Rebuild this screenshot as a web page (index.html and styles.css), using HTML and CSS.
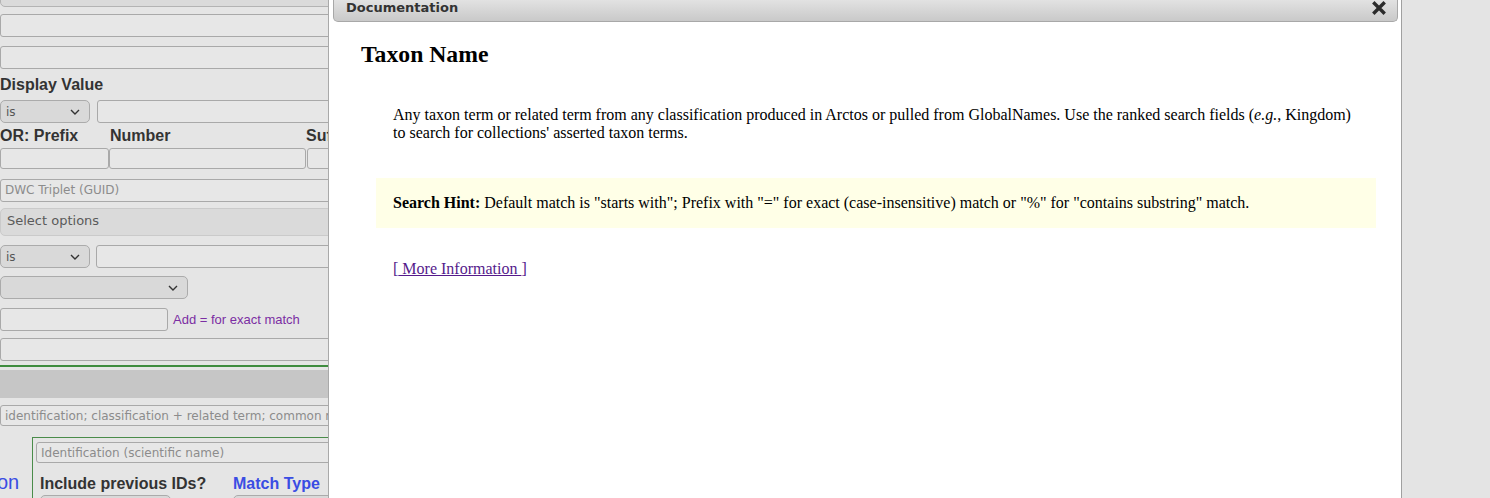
FILE: index.html
```html
<!DOCTYPE html>
<html lang="en">
<head>
<meta charset="utf-8">
<title>Search – Documentation</title>
<link rel="stylesheet" href="styles.css">
</head>
<body>
<div class="page">
  <aside class="form">
    <div class="topbar"></div>
    <div class="box full mt7"></div>
    <div class="box full mt9"></div>

    <div class="label mt6">Display Value</div>
    <div class="row mt5">
      <div class="sel w90"><span>is</span><svg class="chev" width="10" height="6" viewBox="0 0 10 6"><path d="M1 1l4 4 4-4" fill="none" stroke="#333" stroke-width="1.4"/></svg></div>
      <div class="box grow ml7"></div>
    </div>

    <div class="row labels mt4">
      <div class="label lw110">OR: Prefix</div>
      <div class="label lw196">Number</div>
      <div class="label">Suffix</div>
    </div>
    <div class="row mt3">
      <div class="box h21 w109"></div>
      <div class="box h21 w197"></div>
      <div class="box h21 grow ml1"></div>
    </div>

    <div class="box full mt10 ph">DWC Triplet (GUID)</div>
    <div class="optbar mt6">Select options</div>

    <div class="row mt9">
      <div class="sel w90"><span>is</span><svg class="chev" width="10" height="6" viewBox="0 0 10 6"><path d="M1 1l4 4 4-4" fill="none" stroke="#333" stroke-width="1.4"/></svg></div>
      <div class="box grow ml6"></div>
    </div>
    <div class="row mt8">
      <div class="sel w188 h22"><span></span><svg class="chev" width="10" height="6" viewBox="0 0 10 6"><path d="M1 1l4 4 4-4" fill="none" stroke="#333" stroke-width="1.4"/></svg></div>
    </div>
    <div class="row mt9 center">
      <div class="box w168"></div>
      <span class="tip">Add = for exact match</span>
    </div>
    <div class="box full mt7"></div>

    <div class="rule"></div>
    <div class="bar"></div>
    <div class="box full h21 mt7 ph">identification; classification + related term; common name</div>

    <div class="ident">
      <div class="ident-side">on</div>
      <div class="ident-box">
        <div class="box full h21 ph">Identification (scientific name)</div>
        <div class="row ident-labels">
          <div class="label lw193">Include previous IDs?</div>
          <div class="label blue">Match Type</div>
        </div>
        <div class="row ident-sels">
          <div class="sel w131 h22"></div>
          <div class="sel w120 h22 ml62"></div>
        </div>
      </div>
    </div>
  </aside>

  <section class="dialog">
    <header class="dlg-head">
      <span class="dlg-title">Documentation</span>
      <button class="dlg-close" type="button" aria-label="close">
        <svg width="14" height="14" viewBox="0 0 14 14"><path d="M2.5 2.5l9 9M11.5 2.5l-9 9" stroke="#2b2b2b" stroke-width="3.4" stroke-linecap="square"/></svg>
      </button>
    </header>
    <div class="dlg-body">
      <h2 class="doc-title">Taxon Name</h2>
      <div class="doc">
        <p class="doc-text">Any taxon term or related term from any classification produced in Arctos or pulled from GlobalNames. Use the ranked search fields (<i>e.g.</i>, Kingdom) to search for collections' asserted taxon terms.</p>
        <div class="hint"><b>Search Hint:</b> Default match is "starts with"; Prefix with "=" for exact (case-insensitive) match or "%" for "contains substring" match.</div>
        <p class="more">[<a href="#"> More Information </a>]</p>
      </div>
    </div>
  </section>

  <div class="backdrop"></div>
</div>
</body>
</html>
```

FILE: styles.css
```css
* { box-sizing: border-box; }

html, body {
  margin: 0;
  padding: 0;
}

body {
  width: 1490px;
  height: 498px;
  overflow: hidden;
  background: #e4e4e4;
}

.page {
  display: flex;
  height: 498px;
}

/* ---------- search form (left, under the overlay) ---------- */
.form {
  width: 328px;
  flex: none;
  height: 498px;
  overflow: hidden;
  background: #e5e5e5;
  font-family: "Liberation Sans", Arial, sans-serif;
  color: #333;
}

.form > * { width: 345px; }

.topbar {
  height: 28px;
  margin-top: -21px;
  background: #dadada;
  border: 1px solid #b3b3b3;
  border-radius: 0 0 5px 5px;
}

.box {
  height: 23px;
  background: #e7e7e7;
  border: 1px solid #a9a9a9;
  border-radius: 3px;
  flex: none;
}
.box.full { width: 345px; height: 23px; }
.box.full.h21, .h21 { height: 21px; }
.h22 { height: 22px; }

.ph {
  font-family: "DejaVu Sans", Verdana, sans-serif;
  font-size: 12px;
  color: #8c8c8c;
  padding-left: 4px;
  line-height: 20px;
  white-space: nowrap;
  overflow: hidden;
}
.box.full.h21.ph { line-height: 19px; padding-top: 1px; }

.sel {
  display: flex;
  align-items: center;
  justify-content: space-between;
  height: 23px;
  padding: 0 9px 0 5px;
  background: #d9d9d9;
  border: 1px solid #ababab;
  border-radius: 5px;
  flex: none;
  font-family: "DejaVu Sans", Verdana, sans-serif;
  font-size: 12px;
  color: #555;
}
.chev { flex: none; }

.row { display: flex; }
.row.center { align-items: center; }
.grow { flex: 1 1 auto; }

.label {
  flex: none;
  font-size: 16px;
  font-weight: bold;
  line-height: 20px;
  color: #333;
  white-space: nowrap;
}
.labels .label { line-height: 18px; }
.blue { color: #3a4de3; }

.optbar {
  height: 28px;
  background: #dadada;
  border: 1px solid #cacaca;
  border-radius: 5px;
  padding-left: 6px;
  font-family: "DejaVu Sans", Verdana, sans-serif;
  font-size: 13px;
  line-height: 24px;
  color: #5a5a5a;
}

.tip {
  margin-left: 5px;
  font-size: 13px;
  color: #7b2ea3;
  white-space: nowrap;
}

.rule {
  height: 2px;
  margin-top: 4px;
  background: #3f8c3f;
}

.bar {
  height: 28px;
  margin-top: 3px;
  background: #c6c6c6;
}

.ident {
  display: flex;
  margin-top: 11px;
}
.ident-side {
  width: 32px;
  flex: none;
  padding-top: 33px;
  margin-left: -3px;
  font-size: 20px;
  line-height: 24px;
  color: #3a4de3;
  overflow: hidden;
}
.ident-box {
  flex: none;
  width: 320px;
  height: 80px;
  border: 1px solid #4a8c4a;
  padding: 4px 0 0 3px;
  margin-left: 3px;
}
.ident-labels { margin-top: 11px; padding-left: 4px; }
.ident-sels { margin-top: 1px; padding-left: 4px; }

/* widths and spacing helpers */
.w90 { width: 90px; }
.w109 { width: 109px; }
.w197 { width: 197px; }
.w168 { width: 168px; }
.w188 { width: 188px; }
.w131 { width: 131px; }
.w120 { width: 120px; }
.lw110 { width: 110px; }
.lw196 { width: 196px; }
.lw193 { width: 193px; }
.ml1 { margin-left: 1px; }
.ml6 { margin-left: 6px; }
.ml7 { margin-left: 7px; }
.ml62 { margin-left: 62px; }
.mt3 { margin-top: 3px; }
.mt4 { margin-top: 4px; }
.mt5 { margin-top: 5px; }
.mt6 { margin-top: 6px; }
.mt7 { margin-top: 7px; }
.mt8 { margin-top: 8px; }
.mt9 { margin-top: 9px; }
.mt10 { margin-top: 10px; }
.mt11 { margin-top: 11px; }

/* ---------- documentation dialog ---------- */
.dialog {
  width: 1074px;
  flex: none;
  height: 498px;
  background: #fff;
  border-left: 1px solid #a9a9a9;
  border-right: 1px solid #a0a0a0;
}

.dlg-head {
  display: flex;
  align-items: flex-start;
  justify-content: space-between;
  height: 22px;
  margin: 0 3px 0 4px;
  padding: 0 11px 0 12px;
  background: linear-gradient(#e2e2e2, #c9c9c9);
  border: 1px solid #a8a8a8;
  border-top: none;
  border-radius: 0 0 5px 5px;
}

.dlg-title {
  font-family: "DejaVu Sans", Verdana, sans-serif;
  font-size: 13px;
  font-weight: bold;
  line-height: 15px;
  color: #333;
}

.dlg-close {
  margin: 0;
  padding: 0;
  border: 0;
  background: none;
  width: 14px;
  height: 14px;
  margin-top: 1px;
  display: block;
}
.dlg-close svg { display: block; }

.dlg-body {
  padding-left: 32px;
  font-family: "Liberation Serif", "Times New Roman", serif;
  color: #000;
}

.doc-title {
  margin: 18px 0 0;
  font-size: 23.7px;
  font-weight: bold;
  line-height: 28px;
}

.doc {
  width: 1000px;
  margin-left: 15px;
}

.doc-text {
  margin: 38px 0 0;
  padding: 0 17px;
  font-size: 16px;
  line-height: 18px;
}

.hint {
  margin-top: 36px;
  padding: 16px 17px;
  background: #ffffe7;
  font-size: 16px;
  line-height: 18px;
}

.more {
  margin: 32px 0 0;
  padding: 0 17px;
  font-size: 16px;
  line-height: 18px;
  color: #551a8b;
}
.more a { color: #551a8b; }

/* ---------- page outside the dialog ---------- */
.backdrop {
  flex: 1 1 auto;
  background: #e4e4e4;
}
```
